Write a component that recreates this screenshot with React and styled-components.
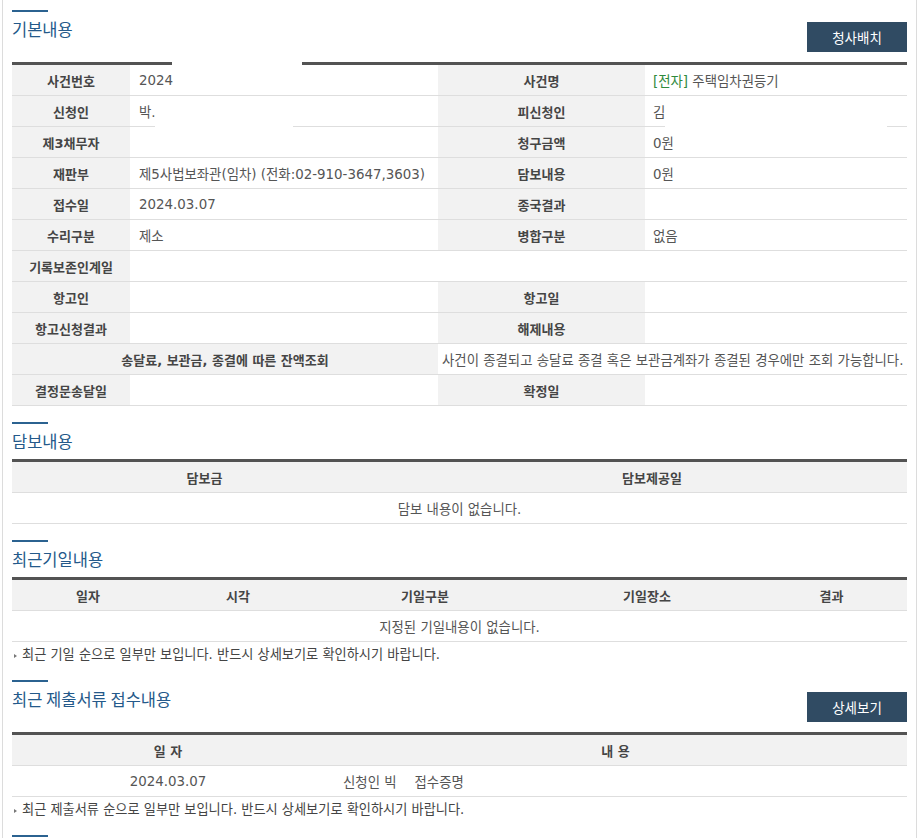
import React from "react";
import styled, { createGlobalStyle } from "styled-components";

const Global = createGlobalStyle`
  html, body { margin: 0; padding: 0; background: #fff; }
  body {
    font-family: "DejaVu Sans", "Noto Sans CJK KR", sans-serif;
    color: #555;
  }
  * { box-sizing: border-box; }
`;

const Frame = styled.div`
  margin-left: 2px;
  width: 915px;
  min-height: 838px;
  border-left: 1px solid #dcdcdc;
  border-right: 1px solid #dcdcdc;
  padding: 0 9px;
`;

const Section = styled.section`
  padding-top: ${(p) => (p.$first ? 10 : 16)}px;
`;

const Head = styled.div`
  display: flex;
  justify-content: space-between;
  align-items: flex-start;
  margin-bottom: ${(p) => (p.$withButton ? 10 : 7)}px;
`;

const TitleBlock = styled.div`
  display: flex;
  flex-direction: column;
  align-items: flex-start;
`;

const Bar = styled.span`
  display: block;
  width: 36px;
  height: 2px;
  background: #2b6290;
  margin-bottom: 6px;
`;

const Title = styled.h2`
  margin: 0;
  font-family: "Noto Sans CJK KR", sans-serif;
  font-size: 16.5px;
  line-height: 22px;
  font-weight: 400;
  color: #24598a;
`;

const Button = styled.button`
  margin-top: 12px;
  width: 100px;
  height: 30px;
  border: none;
  background: #304b63;
  color: #fff;
  font-family: "Noto Sans CJK KR", sans-serif;
  font-size: 13.5px;
  padding: 0;
  cursor: pointer;
`;

const TableWrap = styled.div`
  position: relative;
`;

const Table = styled.table`
  width: 895px;
  table-layout: fixed;
  border-collapse: separate;
  border-spacing: 0;
  border-top: 3px solid #535353;
`;

const Label = styled.th`
  box-sizing: border-box;
  height: 31px;
  padding: 0 4px;
  background: #f2f2f2;
  border-bottom: 1px solid #dedede;
  color: #454545;
  font-size: 13px;
  font-weight: 700;
  text-align: center;
  white-space: nowrap;
`;

const Value = styled.td`
  box-sizing: border-box;
  height: 31px;
  padding: 0 0 0 ${(p) => (p.$pad ?? 9)}px;
  border-bottom: 1px solid #dedede;
  font-size: 13.4px;
  color: #555;
  text-align: ${(p) => (p.$center ? "center" : "left")};
  white-space: nowrap;
`;

const Tag = styled.span`
  color: #2f8a3c;
`;

const Gap = styled.span`
  margin-left: 18px;
`;

const Redact = styled.span`
  position: absolute;
  background: #fff;
  left: ${(p) => p.$x}px;
  top: ${(p) => p.$y}px;
  width: ${(p) => p.$w}px;
  height: ${(p) => p.$h}px;
`;

const Note = styled.p`
  position: relative;
  margin: 0;
  padding: 4px 0 0 10px;
  font-size: 13.2px;
  line-height: 18px;
  color: #444;
  white-space: nowrap;
  &::before {
    content: "";
    position: absolute;
    left: 2px;
    top: 12px;
    border-left: 3px solid #777;
    border-top: 2.5px solid transparent;
    border-bottom: 2.5px solid transparent;
  }
`;

const basicRows = [
  ["사건번호", "2024", "사건명", "title"],
  ["신청인", "박.", "피신청인", "김"],
  ["제3채무자", "", "청구금액", "0원"],
  ["재판부", "제5사법보좌관(임차) (전화:02-910-3647,3603)", "담보내용", "0원"],
  ["접수일", "2024.03.07", "종국결과", ""],
  ["수리구분", "제소", "병합구분", "없음"],
];

function SectionHead({ title, button }) {
  return (
    <Head $withButton={!!button}>
      <TitleBlock>
        <Bar />
        <Title>{title}</Title>
      </TitleBlock>
      {button && <Button>{button}</Button>}
    </Head>
  );
}

export default function App() {
  return (
    <>
      <Global />
      <Frame>
        <Section $first>
          <SectionHead title="기본내용" button="청사배치" />
          <TableWrap>
            <Table>
              <colgroup>
                <col style={{ width: 118 }} />
                <col style={{ width: 308 }} />
                <col style={{ width: 207 }} />
                <col style={{ width: 262 }} />
              </colgroup>
              <tbody>
                {basicRows.map(([l1, v1, l2, v2]) => (
                  <tr key={l1}>
                    <Label>{l1}</Label>
                    <Value>{v1}</Value>
                    <Label>{l2}</Label>
                    <Value $pad={8}>
                      {v2 === "title" ? (
                        <>
                          <Tag>[전자]</Tag> 주택임차권등기
                        </>
                      ) : (
                        v2
                      )}
                    </Value>
                  </tr>
                ))}
                <tr>
                  <Label>기록보존인계일</Label>
                  <Value colSpan={3} />
                </tr>
                <tr>
                  <Label>항고인</Label>
                  <Value />
                  <Label>항고일</Label>
                  <Value />
                </tr>
                <tr>
                  <Label>항고신청결과</Label>
                  <Value />
                  <Label>해제내용</Label>
                  <Value />
                </tr>
                <tr>
                  <Label colSpan={2}>송달료, 보관금, 종결에 따른 잔액조회</Label>
                  <Value colSpan={2} $pad={4}>
                    사건이 종결되고 송달료 종결 혹은 보관금계좌가 종결된 경우에만 조회 가능합니다.
                  </Value>
                </tr>
                <tr>
                  <Label>결정문송달일</Label>
                  <Value />
                  <Label>확정일</Label>
                  <Value />
                </tr>
              </tbody>
            </Table>
            <Redact $x={160} $y={0} $w={130} $h={3} />
            <Redact $x={143} $y={64} $w={138} $h={1} />
            <Redact $x={653} $y={64} $w={222} $h={1} />
          </TableWrap>
        </Section>

        <Section>
          <SectionHead title="담보내용" />
          <Table>
            <colgroup>
              <col style={{ width: 385 }} />
              <col style={{ width: 510 }} />
            </colgroup>
            <tbody>
              <tr>
                <Label>담보금</Label>
                <Label>담보제공일</Label>
              </tr>
              <tr>
                <Value colSpan={2} $center $pad={0}>
                  담보 내용이 없습니다.
                </Value>
              </tr>
            </tbody>
          </Table>
        </Section>

        <Section>
          <SectionHead title="최근기일내용" />
          <Table>
            <colgroup>
              <col style={{ width: 152 }} />
              <col style={{ width: 148 }} />
              <col style={{ width: 226 }} />
              <col style={{ width: 218 }} />
              <col style={{ width: 151 }} />
            </colgroup>
            <tbody>
              <tr>
                <Label>일자</Label>
                <Label>시각</Label>
                <Label>기일구분</Label>
                <Label>기일장소</Label>
                <Label>결과</Label>
              </tr>
              <tr>
                <Value colSpan={5} $center $pad={0}>
                  지정된 기일내용이 없습니다.
                </Value>
              </tr>
            </tbody>
          </Table>
          <Note>최근 기일 순으로 일부만 보입니다. 반드시 상세보기로 확인하시기 바랍니다.</Note>
        </Section>

        <Section>
          <SectionHead title="최근 제출서류 접수내용" button="상세보기" />
          <Table>
            <colgroup>
              <col style={{ width: 312 }} />
              <col style={{ width: 583 }} />
            </colgroup>
            <tbody>
              <tr>
                <Label>일 자</Label>
                <Label>내 용</Label>
              </tr>
              <tr>
                <Value $center $pad={0}>
                  2024.03.07
                </Value>
                <Value $pad={19}>
                  신청인 빅<Gap>접수증명</Gap>
                </Value>
              </tr>
            </tbody>
          </Table>
          <Note>최근 제출서류 순으로 일부만 보입니다. 반드시 상세보기로 확인하시기 바랍니다.</Note>
        </Section>

        <Section>
          <Bar />
        </Section>
      </Frame>
    </>
  );
}
